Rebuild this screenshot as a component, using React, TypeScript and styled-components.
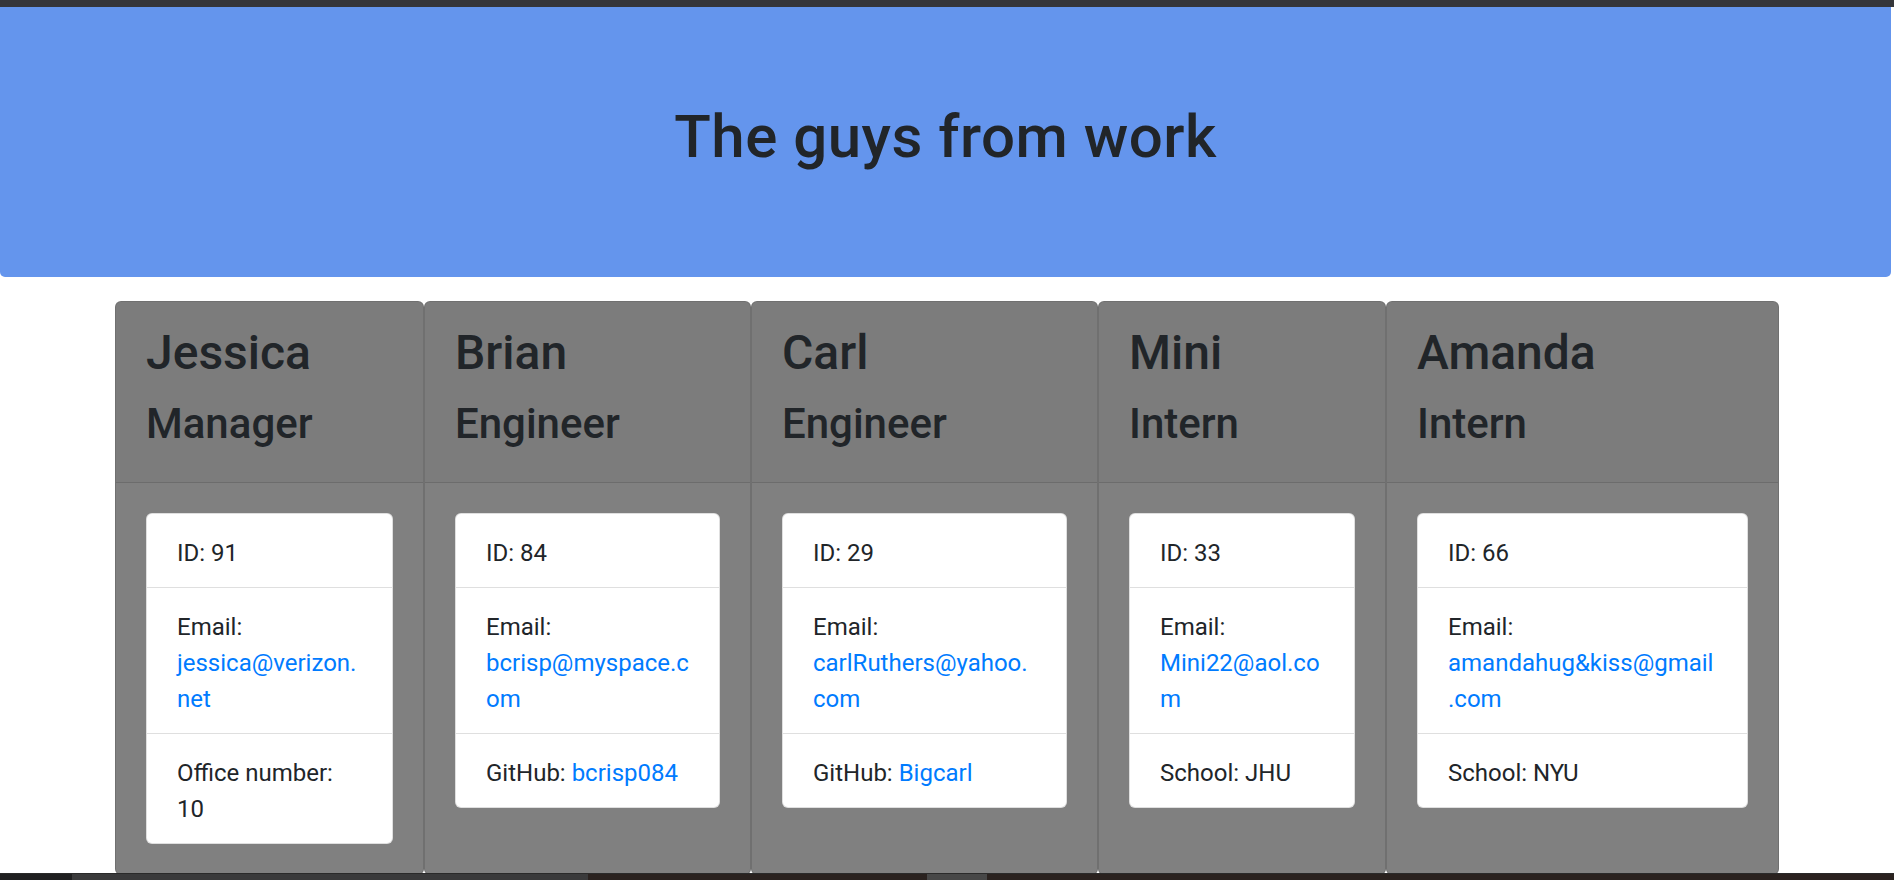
import styled, { createGlobalStyle } from "styled-components";

type Member = {
    name: string;
    role: string;
    id: number;
    email: string[];
    extraLabel: string;
    extraValue: string;
    extraLink?: boolean;
    width: number;
};

const team: Member[] = [
    { name: "Jessica", role: "Manager", id: 91, email: ["jessica@verizon.", "net"], extraLabel: "Office number:", extraValue: "10", width: 309 },
    { name: "Brian", role: "Engineer", id: 84, email: ["bcrisp@myspace.c", "om"], extraLabel: "GitHub:", extraValue: "bcrisp084", extraLink: true, width: 327 },
    { name: "Carl", role: "Engineer", id: 29, email: ["carlRuthers@yahoo.", "com"], extraLabel: "GitHub:", extraValue: "Bigcarl", extraLink: true, width: 347 },
    { name: "Mini", role: "Intern", id: 33, email: ["Mini22@aol.co", "m"], extraLabel: "School:", extraValue: "JHU", width: 288 },
    { name: "Amanda", role: "Intern", id: 66, email: ["amandahug&kiss@gmail", ".com"], extraLabel: "School:", extraValue: "NYU", width: 393 },
];

const App = () => {
    return (
        <>
            <GlobalStyle />
            <TopBar />
            <Jumbotron>
                <Title>The guys from work</Title>
            </Jumbotron>
            <Deck>
                {team.map((m) => (
                    <Card key={m.name} $width={m.width}>
                        <CardHeader>
                            <Name>{m.name}</Name>
                            <Role>{m.role}</Role>
                        </CardHeader>
                        <CardBody>
                            <InfoList>
                                <InfoItem>ID: {m.id}</InfoItem>
                                <InfoItem>
                                    Email:
                                    <br />
                                    <Link href={`mailto:${m.email.join("")}`}>
                                        {m.email[0]}
                                        <br />
                                        {m.email[1]}
                                    </Link>
                                </InfoItem>
                                <InfoItem>
                                    {m.extraLabel}{" "}
                                    {m.extraLink ? (
                                        <Link href={`https://github.com/${m.extraValue}`}>{m.extraValue}</Link>
                                    ) : (
                                        m.extraValue
                                    )}
                                </InfoItem>
                            </InfoList>
                        </CardBody>
                    </Card>
                ))}
            </Deck>
            <BottomBar>
                <BarSegment $width={72} $color="#1f1f20" />
                <BarSegment $width={516} $color="#3a3a3b" />
                <BarSegment $width={339} $color="#2a221f" />
                <BarSegment $width={60} $color="#474747" />
                <BarSegment $width={907} $color="#2a221f" />
            </BottomBar>
        </>
    );
};

export default App;

const GlobalStyle = createGlobalStyle`
    html, body {
        margin: 0;
        padding: 0;
        overflow: hidden;
        background: #ffffff;
    }

    body {
        font-family: Roboto, "Liberation Sans", sans-serif;
        font-size: 24px;
        line-height: 1.5;
        color: #212529;
    }

    * {
        box-sizing: border-box;
    }
`;

const TopBar = styled.div`
    position: fixed;
    top: 0;
    left: 0;
    right: 0;
    height: 7px;
    background: #35363a;
    z-index: 10;
`;

const BottomBar = styled.div`
    position: fixed;
    left: 0;
    right: 0;
    bottom: 0;
    height: 7px;
    display: flex;
    z-index: 10;
`;

const BarSegment = styled.div<{ $width: number; $color: string }>`
    flex: 0 0 ${(p) => p.$width}px;
    background: ${(p) => p.$color};
    border-top: 1px solid #2a2a2a;
`;

const Jumbotron = styled.header`
    margin: 0 3px 24px 0;
    padding: 101px 48px 92px;
    background-color: #6495ed;
    border-radius: 5px;
`;

const Title = styled.h1`
    margin: 0 0 12px;
    font-size: 60px;
    font-weight: 500;
    line-height: 72px;
    letter-spacing: 0.5px;
    text-align: center;
    color: #212529;
`;

const Deck = styled.main`
    display: flex;
    align-items: stretch;
    width: 1664px;
    margin: 0 auto;
`;

const Card = styled.section<{ $width: number }>`
    flex: 0 0 ${(p) => p.$width}px;
    min-width: 0;
    display: flex;
    flex-direction: column;
    background-color: #808080;
    border: 1px solid rgba(0, 0, 0, 0.125);
    border-radius: 6px;
    overflow-wrap: break-word;
`;

const CardHeader = styled.div`
    padding: 18px 30px;
    background-color: rgba(0, 0, 0, 0.03);
    border-bottom: 1px solid rgba(0, 0, 0, 0.125);
    border-radius: 5px 5px 0 0;
`;

const Name = styled.h2`
    margin: 0 0 11px;
    font-size: 48px;
    font-weight: 500;
    line-height: 66px;
`;

const Role = styled.h3`
    margin: 0 0 13px;
    font-size: 42px;
    font-weight: 500;
    line-height: 54px;
`;

const CardBody = styled.div`
    flex: 1;
    padding: 30px;
`;

const InfoList = styled.ul`
    list-style: none;
    margin: 0;
    padding: 0;
    background: #ffffff;
    border: 1px solid rgba(0, 0, 0, 0.125);
    border-radius: 6px;
`;

const InfoItem = styled.li`
    padding: 21px 30px 16px;

    & + & {
        border-top: 1px solid rgba(0, 0, 0, 0.125);
    }
`;

const Link = styled.a`
    color: #007bff;
    text-decoration: none;
    white-space: nowrap;
`;
